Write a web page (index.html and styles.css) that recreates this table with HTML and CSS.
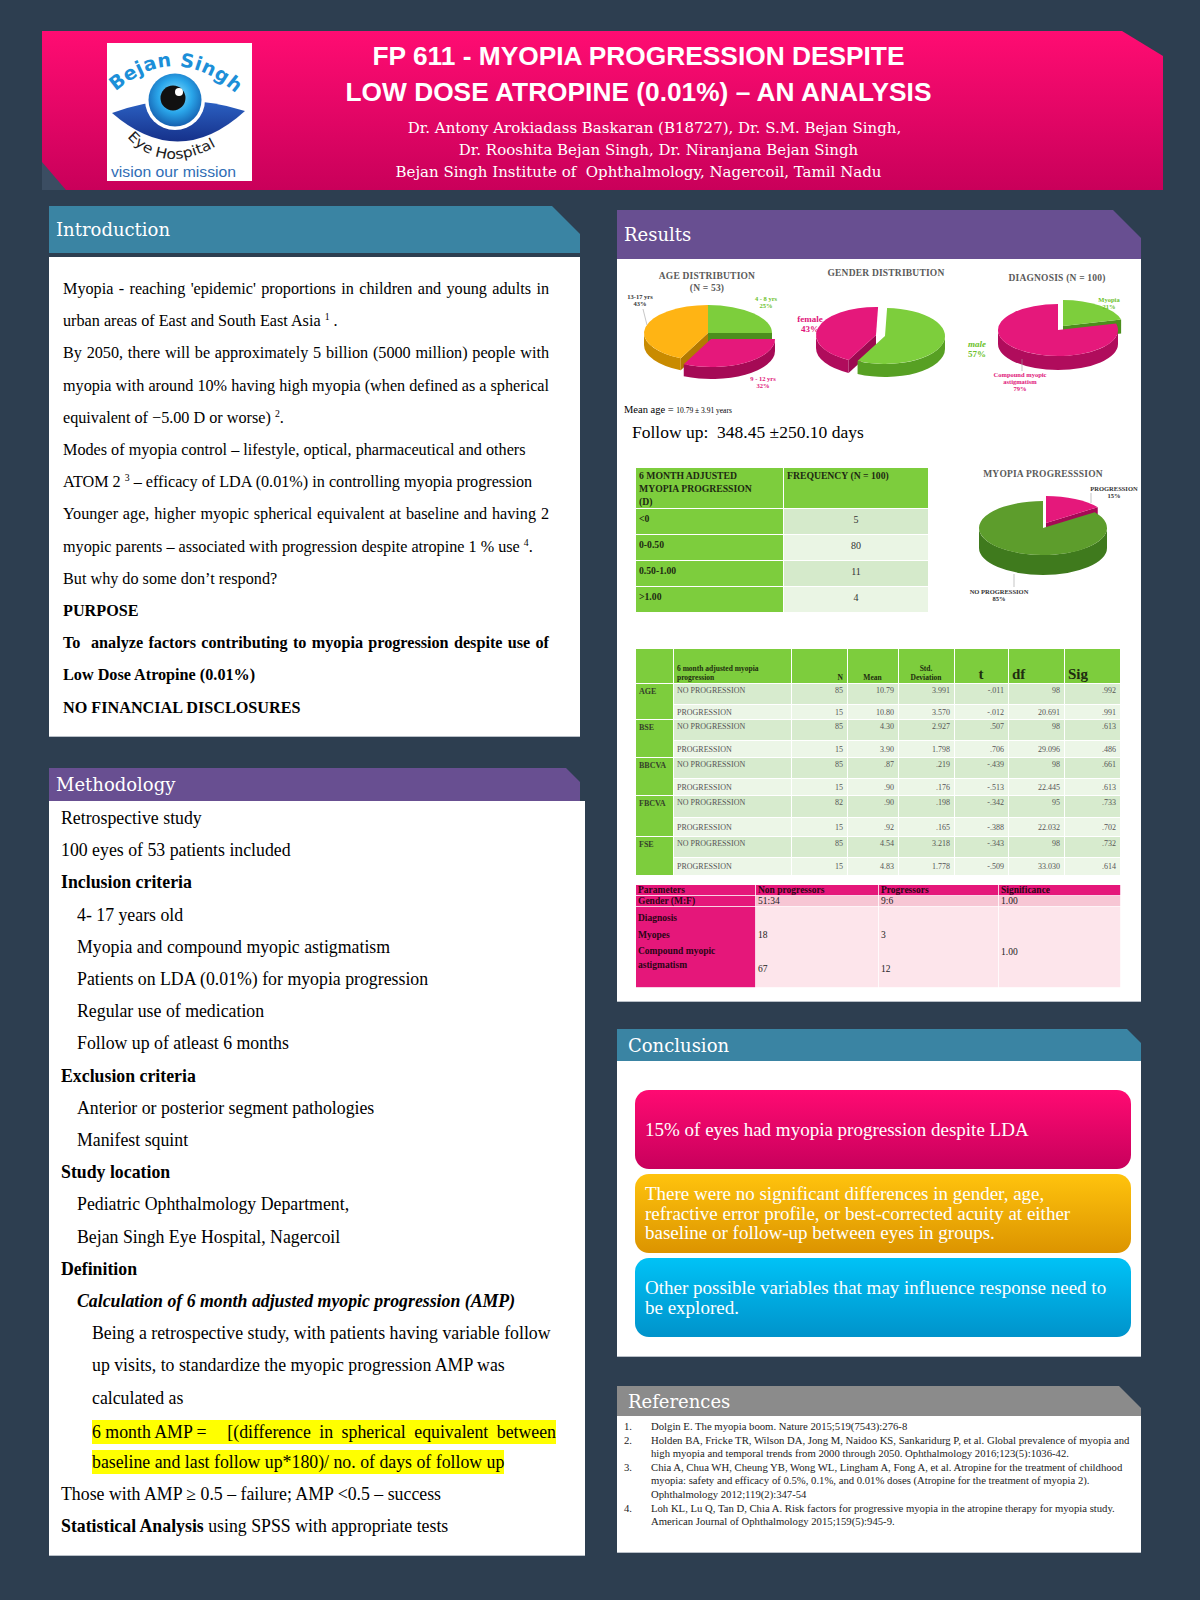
FILE: index.html
```html
<!DOCTYPE html>
<html lang="en">
<head>
<meta charset="utf-8">
<title>FP 611 - Myopia progression despite low dose atropine</title>
<link rel="stylesheet" href="styles.css">
</head>
<body>
<div class="page">
  <header class="banner">
    <div class="logo">
      <svg width="145" height="138" viewBox="0 0 145 138">
        <defs>
          <path id="arcTop" d="M7,50 Q72,-8 139,60"/>
          <path id="arcBot" d="M20,94 Q58,136 118,98"/>
          <radialGradient id="irisG" cx="50%" cy="42%" r="58%">
            <stop offset="0" stop-color="#8fe2ff"/>
            <stop offset="0.55" stop-color="#2aa6ea"/>
            <stop offset="1" stop-color="#1560b0"/>
          </radialGradient>
          <linearGradient id="lidG" x1="0" y1="0" x2="0" y2="1">
            <stop offset="0" stop-color="#2c62c4"/>
            <stop offset="1" stop-color="#16318a"/>
          </linearGradient>
        </defs>
        <rect width="145" height="138" fill="#fff"/>
        <path d="M5,70 Q70,46 138,68 Q72,128 5,70 Z" fill="url(#lidG)"/>
        <circle cx="68" cy="57" r="30" fill="#fff"/>
        <circle cx="68" cy="57" r="26.5" fill="url(#irisG)"/>
        <circle cx="66" cy="55" r="12.5" fill="#111"/>
        <circle cx="72" cy="49" r="4" fill="#fff"/>
        <text class="lg-brand"><textPath href="#arcTop" startOffset="2">Bejan Singh</textPath></text>
        <text class="lg-eye"><textPath href="#arcBot" textLength="98" lengthAdjust="spacingAndGlyphs">Eye Hospital</textPath></text>
        <text class="lg-tag" x="4" y="134" textLength="125" lengthAdjust="spacingAndGlyphs">vision our mission</text>
      </svg>
    </div>
    <div class="title-block">
      <h1>FP 611 - MYOPIA PROGRESSION DESPITE<br>LOW DOSE ATROPINE (0.01%) – AN ANALYSIS</h1>
      <p class="authors"><span class="au au1">Dr. Antony Arokiadass Baskaran (B18727), Dr. S.M. Bejan Singh,</span><span class="au au2">Dr. Rooshita Bejan Singh, Dr. Niranjana Bejan Singh</span><span class="au">Bejan Singh Institute of&nbsp; Ophthalmology, Nagercoil, Tamil Nadu</span></p>
    </div>
  </header>

  <div class="columns">
    <div class="col left">
      <section>
        <h2 class="sec-head teal cut-lg h-intro">Introduction</h2>
        <div class="sec-body intro-body">
          <span class="ln j">Myopia - reaching 'epidemic' proportions in children and young adults in</span>
          <span class="ln">urban areas of East and South East Asia <sup>1</sup> .</span>
          <span class="ln j">By 2050, there will be approximately 5 billion (5000 million) people with</span>
          <span class="ln j">myopia with around 10% having high myopia (when defined as a spherical</span>
          <span class="ln">equivalent of −5.00 D or worse) <sup>2</sup>.</span>
          <span class="ln">Modes of myopia control – lifestyle, optical, pharmaceutical and others</span>
          <span class="ln">ATOM 2 <sup>3</sup> – efficacy of LDA (0.01%) in controlling myopia progression</span>
          <span class="ln j">Younger age, higher myopic spherical equivalent at baseline and having 2</span>
          <span class="ln">myopic parents – associated with progression despite atropine 1 % use <sup>4</sup>.</span>
          <span class="ln">But why do some don’t respond?</span>
          <span class="ln b">PURPOSE</span>
          <span class="ln b j">To&nbsp; analyze factors contributing to myopia progression despite use of</span>
          <span class="ln b">Low Dose Atropine (0.01%)</span>
          <span class="ln b">NO FINANCIAL DISCLOSURES</span>
        </div>
      </section>

      <section class="meth">
        <h2 class="sec-head purple cut-sm h-meth">Methodology</h2>
        <div class="sec-body meth-body">
          <span class="ln">Retrospective study</span>
          <span class="ln">100 eyes of 53 patients included</span>
          <span class="ln b">Inclusion criteria</span>
          <span class="ln i1">4- 17 years old</span>
          <span class="ln i1">Myopia and compound myopic astigmatism</span>
          <span class="ln i1">Patients on LDA (0.01%) for myopia progression</span>
          <span class="ln i1">Regular use of medication</span>
          <span class="ln i1">Follow up of atleast 6 months</span>
          <span class="ln b">Exclusion criteria</span>
          <span class="ln i1">Anterior or posterior segment pathologies</span>
          <span class="ln i1">Manifest squint</span>
          <span class="ln b">Study location</span>
          <span class="ln i1">Pediatric Ophthalmology Department,</span>
          <span class="ln i1">Bejan Singh Eye Hospital, Nagercoil</span>
          <span class="ln b">Definition</span>
          <span class="ln i1 b it">Calculation of 6 month adjusted myopic progression (AMP)</span>
          <span class="ln i2">Being a retrospective study, with patients having variable follow</span>
          <span class="ln i2">up visits, to standardize the myopic progression AMP was</span>
          <span class="ln i2">calculated as</span>
          <span class="ln i2"><span class="hl hl-row"><span class="amp1">6 month AMP =</span><span class="amp2">[(difference in spherical equivalent between</span></span></span>
          <span class="ln i2"><span class="hl">baseline and last follow up*180)/ no. of days of follow up</span></span>
          <span class="ln">Those with AMP ≥ 0.5 – failure; AMP &lt;0.5 – success</span>
          <span class="ln"><b>Statistical Analysis</b> using SPSS with appropriate tests</span>
        </div>
      </section>
    </div>

    <div class="col right">
      <section>
        <h2 class="sec-head purple cut-lg h-res">Results</h2>
        <div class="sec-body res-body">
          <svg class="charts" width="524" height="140" viewBox="0 0 524 140">
            <text class="ct" x="90" y="20">AGE DISTRIBUTION</text>
            <text class="ct" x="90" y="32">(N = 53)</text>
            <text class="ct" x="269" y="17">GENDER DISTRIBUTION</text>
            <text class="ct" x="440" y="22">DIAGNOSIS (N = 100)</text>

            <!-- age pie -->
            <path d="M91,74 L155,74 L155,86 L91,86 Z" fill="#4c8e1d"/>
            <path d="M91,74 L91,46 A64,28 0 0 1 155,74 Z" fill="#7dce3c"/>
            <path d="M91,74 L63.75,99.33 L63.75,111.33 L91,86 Z" fill="#b37a00"/>
            <path d="M63.75,99.33 A64,28 0 0 1 27,74 L27,86 A64,28 0 0 0 63.75,111.33 Z" fill="#c98b00"/>
            <path d="M91,74 L63.75,99.33 A64,28 0 0 1 91,46 Z" fill="#ffb414"/>
            <path d="M158,80 A64,28 0 0 1 66.75,105.33 L66.75,117.33 A64,28 0 0 0 158,92 Z" fill="#a50a55"/>
            <path d="M94,80 L158,80 A64,28 0 0 1 66.75,105.33 Z" fill="#e5187b"/>
            <line x1="26" y1="50" x2="30" y2="66" class="lead"/>
            <text class="pl dk" x="23" y="40">13-17 yrs</text>
            <text class="pl dk" x="23" y="47">43%</text>
            <text class="pl gr" x="149" y="42">4 - 8 yrs</text>
            <text class="pl gr" x="149" y="49">25%</text>
            <text class="pl pk" x="146" y="122">9 - 12 yrs</text>
            <text class="pl pk" x="146" y="129">32%</text>

            <!-- gender pie -->
            <path d="M259,76 L231.57,100.9 L231.57,113.9 L259,89 Z" fill="#9c0a50"/>
            <path d="M231.57,100.9 A60,28 0 0 1 199,76 L199,89 A60,28 0 0 0 231.57,113.9 Z" fill="#b00c5c"/>
            <path d="M259,76 L231.57,100.9 A60,28 0 0 1 261.09,48.02 Z" fill="#e5187b"/>
            <path d="M328,77 A60,28 0 0 1 240.57,101.9 L240.57,114.9 A60,28 0 0 0 328,90 Z" fill="#57a023"/>
            <path d="M268,77 L270.09,49.02 A60,28 0 1 1 240.57,101.9 Z" fill="#7dce3c"/>
            <text class="pl pk big" x="193" y="63">female</text>
            <text class="pl pk big" x="193" y="73">43%</text>
            <text class="pl gr big itl" x="360" y="88">male</text>
            <text class="pl gr big" x="360" y="98">57%</text>

            <!-- diagnosis pie -->
            <path d="M446,67 L504.12,60.53 L504.12,74.53 L446,81 Z" fill="#4c8e1d"/>
            <path d="M446,67 L446,41 A60,26 0 0 1 504.12,60.53 Z" fill="#7dce3c"/>
            <path d="M501,71 A60,26 0 0 1 381,71 L381,85 A60,26 0 0 0 501,85 Z" fill="#b00c5c"/>
            <path d="M441,71 L499.12,64.53 A60,26 0 1 1 441,45 Z" fill="#e5187b"/>
            <line x1="405" y1="100" x2="405" y2="112" class="lead"/>
            <text class="pl gr" x="492" y="43">Myopia</text>
            <text class="pl gr" x="492" y="50">21%</text>
            <text class="pl pk" x="403" y="118">Compound myopic</text>
            <text class="pl pk" x="403" y="125">astigmatism</text>
            <text class="pl pk" x="403" y="132">79%</text>
          </svg>

          <p class="mean">Mean age = <span class="sm">10.79 ± 3.91 years</span></p>
          <p class="follow">Follow up:&nbsp; 348.45 ±250.10 days</p>

          <div class="freq-row">
            <table class="freq">
              <colgroup><col class="fc1"><col class="fc2"></colgroup>
              <thead>
                <tr><th>6 MONTH ADJUSTED<br>MYOPIA PROGRESSION<br>(D)</th><th>FREQUENCY (N = 100)</th></tr>
              </thead>
              <tbody>
                <tr class="o"><th>&lt;0</th><td>5</td></tr>
                <tr class="e"><th>0-0.50</th><td>80</td></tr>
                <tr class="o"><th>0.50-1.00</th><td>11</td></tr>
                <tr class="e"><th>&gt;1.00</th><td>4</td></tr>
              </tbody>
            </table>
            <svg class="prog" width="180" height="147" viewBox="0 0 180 147">
              <text class="ct" x="82" y="14">MYOPIA PROGRESSSION</text>
              <path d="M85,60 L136.78,44.13 L136.78,64.13 L85,80 Z" fill="#a50a55"/>
              <path d="M85,60 L85,33 A64,27 0 0 1 136.78,44.13 Z" fill="#e5187b"/>
              <path d="M146,65 A64,27 0 0 1 18,65 L18,85 A64,27 0 0 0 146,85 Z" fill="#3f7a1d"/>
              <path d="M82,65 L133.78,49.13 A64,27 0 1 1 82,38 Z" fill="#5d9d2c"/>
              <line x1="130" y1="30" x2="130" y2="40" class="lead"/>
              <line x1="53" y1="111" x2="53" y2="124" class="lead"/>
              <text class="pl dk" x="153" y="28">PROGRESSION</text>
              <text class="pl dk" x="153" y="35">15%</text>
              <text class="pl dk" x="38" y="131">NO PROGRESSION</text>
              <text class="pl dk" x="38" y="138">85%</text>
            </svg>
          </div>

          <table class="stats">
            <colgroup>
              <col class="s0"><col class="s1"><col class="s2"><col class="s3"><col class="s4"><col class="s5"><col class="s6"><col class="s7">
            </colgroup>
            <thead>
              <tr>
                <th></th>
                <th class="tl">6 month adjusted myopia<br>progression</th>
                <th class="tr">N</th>
                <th class="tc">Mean</th>
                <th class="tc">Std.<br>Deviation</th>
                <th class="tc big">t</th>
                <th class="tl big">df</th>
                <th class="tl big">Sig</th>
              </tr>
            </thead>
            <tbody>
              <tr class="np"><th class="g" rowspan="2">AGE</th><td>NO PROGRESSION</td><td class="n">85</td><td class="n">10.79</td><td class="n">3.991</td><td class="n">-.011</td><td class="n">98</td><td class="n">.992</td></tr>
              <tr class="pr h15"><td>PROGRESSION</td><td class="n">15</td><td class="n">10.80</td><td class="n">3.570</td><td class="n">-.012</td><td class="n">20.691</td><td class="n">.991</td></tr>
              <tr class="np"><th class="g" rowspan="2">BSE</th><td>NO PROGRESSION</td><td class="n">85</td><td class="n">4.30</td><td class="n">2.927</td><td class="n">.507</td><td class="n">98</td><td class="n">.613</td></tr>
              <tr class="pr h17"><td>PROGRESSION</td><td class="n">15</td><td class="n">3.90</td><td class="n">1.798</td><td class="n">.706</td><td class="n">29.096</td><td class="n">.486</td></tr>
              <tr class="np"><th class="g" rowspan="2">BBCVA</th><td>NO PROGRESSION</td><td class="n">85</td><td class="n">.87</td><td class="n">.219</td><td class="n">-.439</td><td class="n">98</td><td class="n">.661</td></tr>
              <tr class="pr h17"><td>PROGRESSION</td><td class="n">15</td><td class="n">.90</td><td class="n">.176</td><td class="n">-.513</td><td class="n">22.445</td><td class="n">.613</td></tr>
              <tr class="np np22"><th class="g" rowspan="2">FBCVA</th><td>NO PROGRESSION</td><td class="n">82</td><td class="n">.90</td><td class="n">.198</td><td class="n">-.342</td><td class="n">95</td><td class="n">.733</td></tr>
              <tr class="pr h19"><td>PROGRESSION</td><td class="n">15</td><td class="n">.92</td><td class="n">.165</td><td class="n">-.388</td><td class="n">22.032</td><td class="n">.702</td></tr>
              <tr class="np"><th class="g" rowspan="2">FSE</th><td>NO PROGRESSION</td><td class="n">85</td><td class="n">4.54</td><td class="n">3.218</td><td class="n">-.343</td><td class="n">98</td><td class="n">.732</td></tr>
              <tr class="pr h18"><td>PROGRESSION</td><td class="n">15</td><td class="n">4.83</td><td class="n">1.778</td><td class="n">-.509</td><td class="n">33.030</td><td class="n">.614</td></tr>
            </tbody>
          </table>

          <table class="params">
            <colgroup><col class="p1"><col class="p2"><col class="p3"><col class="p4"></colgroup>
            <thead>
              <tr><th>Parameters</th><th>Non progressors</th><th>Progressors</th><th>Significance</th></tr>
            </thead>
            <tbody>
              <tr class="pg"><th>Gender (M:F)</th><td>51:34</td><td>9:6</td><td>1.00</td></tr>
              <tr class="pd">
                <th><div class="l17">Diagnosis</div><div class="l17">Myopes</div><div class="l14">Compound myopic</div><div class="l14">astigmatism</div></th>
                <td><div class="l17 top20">18</div><div class="l17 top17">67</div></td>
                <td><div class="l17 top20">3</div><div class="l17 top17">12</div></td>
                <td><div class="l17 top37">1.00</div></td>
              </tr>
            </tbody>
          </table>
        </div>
      </section>

      <section class="conc">
        <h2 class="sec-head teal cut-sm h-conc">Conclusion</h2>
        <div class="sec-body conc-body">
          <div class="cbox pink">15% of eyes had myopia progression despite LDA</div>
          <div class="cbox orange">There were no significant differences in gender, age,<br>refractive error profile, or best-corrected acuity at either<br>baseline or follow-up between eyes in groups.</div>
          <div class="cbox blue">Other possible variables that may influence response need to<br>be explored.</div>
        </div>
      </section>

      <section class="refs">
        <h2 class="sec-head grey cut-md h-refs">References</h2>
        <div class="sec-body refs-body">
          <div class="ref"><span class="rn">1.</span><span class="rt">Dolgin E. The myopia boom. Nature 2015;519(7543):276-8</span></div>
          <div class="ref"><span class="rn">2.</span><span class="rt">Holden BA, Fricke TR, Wilson DA, Jong M, Naidoo KS, Sankaridurg P, et al. Global prevalence of myopia and<br>high myopia and temporal trends from 2000 through 2050. Ophthalmology 2016;123(5):1036-42.</span></div>
          <div class="ref"><span class="rn">3.</span><span class="rt">Chia A, Chua WH, Cheung YB, Wong WL, Lingham A, Fong A, et al. Atropine for the treatment of childhood<br>myopia: safety and efficacy of 0.5%, 0.1%, and 0.01% doses (Atropine for the treatment of myopia 2).<br>Ophthalmology 2012;119(2):347-54</span></div>
          <div class="ref"><span class="rn">4.</span><span class="rt">Loh KL, Lu Q, Tan D, Chia A. Risk factors for progressive myopia in the atropine therapy for myopia study.<br>American Journal of Ophthalmology 2015;159(5):945-9.</span></div>
        </div>
      </section>
    </div>
  </div>
</div>
</body>
</html>
```

FILE: styles.css
```css
* { box-sizing: border-box; }

html, body {
  margin: 0;
  padding: 0;
}

body {
  width: 1200px;
  min-height: 1600px;
  background: #2d3e50;
  font-family: "Liberation Serif", "Times New Roman", serif;
  color: #000;
}

.page {
  padding-top: 31px;
  padding-bottom: 40px;
}

/* ---------- banner ---------- */
.banner {
  position: relative;
  display: flex;
  margin-left: 42px;
  width: 1121px;
  height: 159px;
  background: linear-gradient(#ff0c72, #c9005a);
  clip-path: polygon(0 0, 1080px 0, 100% 25px, 100% 100%, 0 100%);
}

.banner::after {
  content: "";
  position: absolute;
  left: 0;
  bottom: 0;
  width: 24px;
  height: 28px;
  background: #3b4d62;
  clip-path: polygon(0 0, 100% 100%, 0 100%);
}

.logo {
  flex: none;
  width: 145px;
  height: 138px;
  margin: 12px 0 0 65px;
}

.logo svg { display: block; }

.lg-brand {
  font-family: "DejaVu Sans", sans-serif;
  font-weight: bold;
  font-size: 19px;
  letter-spacing: 0.6px;
  fill: #1c8fd8;
}

.lg-eye {
  font-family: "DejaVu Sans", sans-serif;
  font-size: 14px;
  fill: #1d1d1d;
}

.lg-tag {
  font-family: "Liberation Sans", sans-serif;
  font-size: 15px;
  fill: #2f6db5;
}

.title-block {
  width: 773px;
  padding-top: 7px;
  text-align: center;
  color: #fff;
}

.title-block h1 {
  margin: 0;
  font-family: "Liberation Sans", Arial, sans-serif;
  font-weight: bold;
  font-size: 26.3px;
  line-height: 36px;
}

.authors {
  margin: 7px 0 0;
  font-family: "DejaVu Serif", serif;
  font-size: 15px;
  line-height: 22px;
}

.au { display: block; }
.au1 { padding-left: 32px; }
.au2 { padding-left: 40px; }

/* ---------- columns ---------- */
.columns {
  display: flex;
  align-items: flex-start;
  gap: 37px;
  margin: 16px 0 0 49px;
}

.left { width: 531px; flex: none; }
.right { width: 524px; flex: none; padding-top: 4px; }

section { margin: 0; }

.sec-head {
  display: flex;
  align-items: center;
  margin: 0;
  padding-left: 7px;
  color: #fff;
  font-family: "DejaVu Serif", serif;
  font-weight: normal;
  font-size: 18px;
}

.teal { background: #3a84a3; }
.purple { background: #684f91; }
.grey { background: #8b8b8b; }

.cut-lg { clip-path: polygon(0 0, calc(100% - 28px) 0, 100% 28px, 100% 100%, 0 100%); }
.cut-md { clip-path: polygon(0 0, calc(100% - 22px) 0, 100% 22px, 100% 100%, 0 100%); }
.cut-sm { clip-path: polygon(0 0, calc(100% - 14px) 0, 100% 14px, 100% 100%, 0 100%); }

.sec-body {
  background: #fff;
  border-bottom: 1px solid #b9c0c8;
}

.ln {
  display: block;
  white-space: nowrap;
}

.j {
  text-align: justify;
  text-align-last: justify;
}

.b { font-weight: bold; }
.it { font-style: italic; }

sup {
  font-size: 0.6em;
  line-height: 0;
  vertical-align: 0.6em;
}

/* intro */
.h-intro { height: 47px; }

.intro-body {
  margin-top: 4px;
  height: 480px;
  padding: 16px 31px 0 14px;
  font-size: 16.2px;
  line-height: 32.2px;
}

/* methodology */
.meth { margin-top: 31px; }
.h-meth { height: 33px; }

.meth-body {
  width: 536px;
  height: 755px;
  padding: 1px 10px 0 12px;
  font-size: 17.8px;
  line-height: 32.2px;
}

.i1 { padding-left: 16px; }
.i2 { padding-left: 31px; }

.hl {
  background: #ffff00;
  padding: 2px 0;
}

.hl-row {
  display: inline-flex;
  justify-content: space-between;
  width: 464px;
  padding: 0;
  line-height: 24px;
  vertical-align: middle;
}

.amp2 { word-spacing: 4px; }

/* ---------- results ---------- */
.h-res { height: 49px; padding-left: 7px; }

.res-body {
  height: 743px;
  overflow: hidden;
}

.charts { display: block; }

.ct {
  font-family: "Liberation Serif", serif;
  font-size: 9.5px;
  font-weight: bold;
  fill: #5a5a5a;
  text-anchor: middle;
  letter-spacing: 0.2px;
}

.pl {
  font-family: "Liberation Serif", serif;
  font-size: 6.5px;
  font-weight: bold;
  text-anchor: middle;
}

.pl.big { font-size: 9px; }
.pl.itl { font-style: italic; }
.dk { fill: #333; }
.gr { fill: #6cbf2a; }
.pk { fill: #e0157a; }

.lead {
  stroke: #a0a0a0;
  stroke-width: 0.6;
}

.mean {
  margin: 4px 0 0 7px;
  font-size: 10.5px;
  line-height: 14px;
}

.mean .sm { font-size: 7.5px; }

.follow {
  margin: 3px 0 0 15px;
  font-size: 17.5px;
  line-height: 22px;
}

.freq-row {
  display: flex;
  align-items: flex-start;
  margin: 24px 0 0 18px;
}

.freq {
  flex: none;
  width: 293px;
  border-collapse: collapse;
  table-layout: fixed;
  font-family: "Liberation Serif", serif;
}

.fc1 { width: 148px; }
.fc2 { width: 145px; }

.freq th,
.freq td {
  border: 1px solid #fff;
}

.freq thead th {
  height: 40px;
  padding: 1px 3px 0;
  background: #7dcd3d;
  vertical-align: top;
  text-align: left;
  font-size: 9.7px;
  line-height: 13px;
  font-weight: bold;
  color: #1e2a12;
}

.freq tbody th {
  height: 26px;
  padding: 3px 3px 0;
  background: #7dcd3d;
  vertical-align: top;
  text-align: left;
  font-size: 9.7px;
  line-height: 13px;
  font-weight: bold;
  color: #1e2a12;
}

.freq td {
  padding-top: 4px;
  vertical-align: top;
  text-align: center;
  font-size: 10px;
  line-height: 13px;
  color: #333;
}

.freq tr.o td { background: #d5eacb; }
.freq tr.e td { background: #eaf5e4; }

.prog {
  flex: none;
  display: block;
  margin: -4px 0 0 32px;
}

/* stats table */
.stats {
  width: 485px;
  margin: 35px 0 0 18px;
  border-collapse: collapse;
  table-layout: fixed;
  font-family: "Liberation Serif", serif;
  font-size: 8px;
  color: #555;
}

.s0 { width: 38px; }
.s1 { width: 118px; }
.s2 { width: 56px; }
.s3 { width: 51px; }
.s4 { width: 56px; }
.s5 { width: 54px; }
.s6 { width: 56px; }
.s7 { width: 56px; }

.stats th,
.stats td {
  border: 1px solid rgba(255, 255, 255, 0.75);
  padding: 0 4px 0 3px;
  white-space: nowrap;
  overflow: hidden;
  font-weight: normal;
}

.stats thead th {
  height: 35px;
  padding-bottom: 1px;
  background: #7dcd3d;
  vertical-align: bottom;
  font-size: 7.5px;
  line-height: 9px;
  font-weight: bold;
  color: #1f2d10;
}

.stats thead th.big {
  font-size: 15px;
  line-height: 16px;
}

.tl { text-align: left; }
.tr { text-align: right; }
.tc { text-align: center; }

.stats th.g {
  background: #7dcd3d;
  vertical-align: top;
  text-align: left;
  padding-top: 3px;
  font-weight: bold;
  color: #34422a;
}

.stats tr.np td {
  height: 21px;
  padding-top: 2px;
  vertical-align: top;
  background: #d7ebce;
}

.stats tr.np22 td { height: 22px; }

.stats tr.pr td {
  vertical-align: middle;
  background: #ecf6e7;
}

.stats tr.h15 td { height: 15px; }
.stats tr.h17 td { height: 17px; }
.stats tr.h18 td { height: 18px; }
.stats tr.h19 td { height: 19px; }

.stats td.n { text-align: right; }

/* params table */
.params {
  width: 485px;
  margin: 8px 0 0 18px;
  border-collapse: collapse;
  table-layout: fixed;
  font-family: "Liberation Serif", serif;
  font-size: 9.5px;
  color: #222;
}

.p1 { width: 120px; }
.p2 { width: 123px; }
.p3 { width: 120px; }
.p4 { width: 122px; }

.params th,
.params td {
  padding: 0 2px;
  text-align: left;
  border: 1px solid rgba(255, 255, 255, 0.8);
  vertical-align: top;
}

.params thead th {
  height: 11px;
  line-height: 10px;
  background: #e5177a;
  font-weight: bold;
  color: #2a0515;
}

.params tbody th {
  background: #e5177a;
  font-weight: bold;
  color: #2a0515;
}

.params tr.pg th,
.params tr.pg td {
  height: 10px;
  line-height: 10px;
}

.params tr.pg td { background: #f7c6d4; }

.params tr.pd th,
.params tr.pd td {
  height: 81px;
}

.params tr.pd th { padding-top: 3px; }
.params tr.pd td { background: #fde5eb; }

.l17 { line-height: 17px; }
.l14 { line-height: 14px; }
.top20 { margin-top: 20px; }
.top17 { margin-top: 17px; }
.top37 { margin-top: 37px; }

/* ---------- conclusion ---------- */
.conc { margin-top: 27px; }
.h-conc { height: 32px; padding-left: 11px; }

.conc-body {
  height: 296px;
  padding: 29px 10px 0 18px;
}

.cbox {
  display: flex;
  align-items: center;
  height: 79px;
  margin-bottom: 5px;
  padding: 0 8px 0 10px;
  border-radius: 14px;
  color: #fff;
  font-family: "Liberation Serif", serif;
  font-size: 19px;
  line-height: 19.5px;
  white-space: nowrap;
}

.cbox.pink { background: linear-gradient(#ff0a72, #c8005c); }
.cbox.orange { background: linear-gradient(#ffc30d, #dc9400); }
.cbox.blue { background: linear-gradient(#00c2f6, #0093cb); }

/* ---------- references ---------- */
.refs { margin-top: 29px; }
.h-refs { height: 30px; padding-left: 11px; }

.refs-body {
  height: 137px;
  padding: 4px 0 0 7px;
  font-family: "Liberation Serif", serif;
  font-size: 10.7px;
  line-height: 13.6px;
  color: #222;
}

.ref { display: flex; }
.rn { flex: none; width: 27px; }
.rt { white-space: nowrap; }
```
